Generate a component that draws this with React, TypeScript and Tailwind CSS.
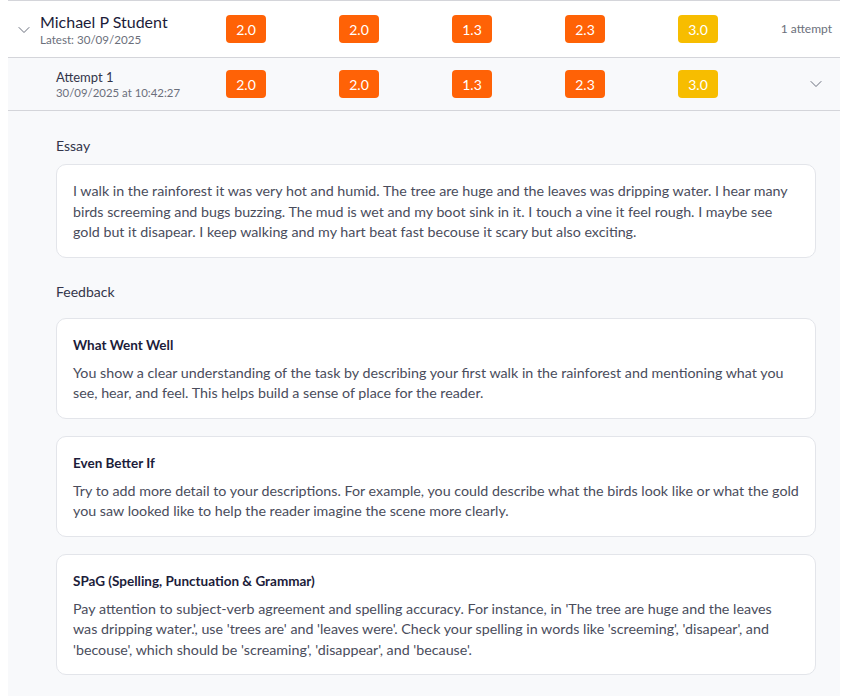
import { ChevronDown } from 'lucide-react';

const scores = [
  { value: '2.0', tone: 'orange' },
  { value: '2.0', tone: 'orange' },
  { value: '1.3', tone: 'orange' },
  { value: '2.3', tone: 'orange' },
  { value: '3.0', tone: 'yellow' },
];

const essay =
  'I walk in the rainforest it was very hot and humid. The tree are huge and the leaves was dripping water. I hear many birds screeming and bugs buzzing. The mud is wet and my boot sink in it. I touch a vine it feel rough. I maybe see gold but it disapear. I keep walking and my hart beat fast becouse it scary but also exciting.';

const feedback = [
  {
    title: 'What Went Well',
    body: 'You show a clear understanding of the task by describing your first walk in the rainforest and mentioning what you see, hear, and feel. This helps build a sense of place for the reader.',
  },
  {
    title: 'Even Better If',
    body: 'Try to add more detail to your descriptions. For example, you could describe what the birds look like or what the gold you saw looked like to help the reader imagine the scene more clearly.',
  },
  {
    title: 'SPaG (Spelling, Punctuation & Grammar)',
    body: "Pay attention to subject-verb agreement and spelling accuracy. For instance, in 'The tree are huge and the leaves was dripping water.', use 'trees are' and 'leaves were'. Check your spelling in words like 'screeming', 'disapear', and 'becouse', which should be 'screaming', 'disappear', and 'because'.",
  },
];

function ScoreCells() {
  return (
    <>
      {scores.map((s, idx) => (
        <div key={idx} className={`shrink-0 ${idx === 4 ? 'w-[96px]' : 'w-[113px]'}`}>
          <span
            className={`flex h-[28px] w-[40px] items-center justify-center rounded-[4px] text-[14px] text-white ${
              s.tone === 'yellow' ? 'bg-[#f7bd00]' : 'bg-[#ff6206]'
            }`}
          >
            {s.value}
          </span>
        </div>
      ))}
    </>
  );
}

export default function App() {
  return (
    <div
      className="min-h-[696px] bg-white pl-2"
      style={{ fontFamily: 'Lato, "Noto Sans", sans-serif' }}
    >
      <div className="w-[832px] border-t border-[#d4d5da]">
        {/* Student row */}
        <div className="flex h-[57px] items-center border-b border-[#d4d5da] bg-white">
          <div className="flex w-[32px] shrink-0 justify-center pt-[1px]">
            <ChevronDown className="h-[20px] w-[20px] text-[#5b6070]" strokeWidth={1.1} />
          </div>
          <div className="w-[186px] shrink-0">
            <div className="text-[16px] leading-[20px] text-[#1c1c3a]">Michael P Student</div>
            <div className="mt-[1px] text-[11.6px] leading-[14px] text-[#6b6f7b]">Latest: 30/09/2025</div>
          </div>
          <ScoreCells />
          <div className="flex-1 whitespace-nowrap pr-2 text-right text-[12px] text-[#6b6f7b]">1 attempt</div>
        </div>

        {/* Attempt row */}
        <div className="flex h-[53px] items-center border-b border-[#d4d5da] bg-[#f8f9fb]">
          <div className="w-[218px] shrink-0 pl-[48px]">
            <div className="text-[13px] leading-[18px] text-[#33354a]">Attempt 1</div>
            <div className="text-[11.4px] leading-[14px] text-[#6b6f7b]">30/09/2025 at 10:42:27</div>
          </div>
          <ScoreCells />
          <div className="flex flex-1 justify-end pr-[14px]">
            <ChevronDown className="h-[20px] w-[20px] text-[#5b6070]" strokeWidth={1.1} />
          </div>
        </div>

        {/* Attempt details */}
        <div className="min-h-[585px] bg-[#f8f9fb] pb-6 pl-[48px] pr-[24px] pt-[25px]">
          <div className="mb-2 text-[14px] leading-[20px] text-[#33354a]">Essay</div>
          <div className="rounded-[10px] border border-[#e3e5ea] bg-white px-4 pb-[14px] pt-4 text-[14.27px] leading-[20.5px] text-[#4a4d5c]">
            {essay}
          </div>

          <div className="mb-4 mt-6 text-[14px] leading-[20px] text-[#33354a]">Feedback</div>
          <div className="flex flex-col gap-[17px]">
            {feedback.map((f) => (
              <div
                key={f.title}
                className="rounded-[10px] border border-[#e3e5ea] bg-white px-4 pb-[14px] pt-4"
              >
                <div className="mb-2 text-[13.5px] font-bold leading-[20px] text-[#1c1c3a]">
                  {f.title}
                </div>
                <div className="text-[14.27px] leading-[20.5px] text-[#4a4d5c]">{f.body}</div>
              </div>
            ))}
          </div>
        </div>
      </div>
    </div>
  );
}
